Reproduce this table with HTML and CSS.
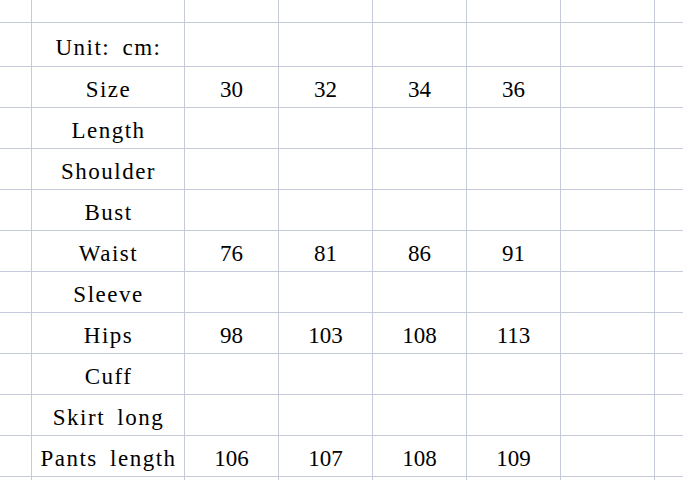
FILE: index.html
```html
<!DOCTYPE html>
<html>
<head>
<meta charset="utf-8">
<link rel="stylesheet" href="styles.css">
</head>
<body>
<div class="sheet">
  <div class="c"></div><div class="c"></div><div class="c"></div><div class="c"></div><div class="c"></div><div class="c"></div><div class="c"></div><div class="c"></div>

  <div class="c"></div><div class="c lab">Unit: cm:</div><div class="c"></div><div class="c"></div><div class="c"></div><div class="c"></div><div class="c"></div><div class="c"></div>

  <div class="c"></div><div class="c lab">Size</div><div class="c num">30</div><div class="c num">32</div><div class="c num">34</div><div class="c num">36</div><div class="c"></div><div class="c"></div>

  <div class="c"></div><div class="c lab">Length</div><div class="c"></div><div class="c"></div><div class="c"></div><div class="c"></div><div class="c"></div><div class="c"></div>

  <div class="c"></div><div class="c lab">Shoulder</div><div class="c"></div><div class="c"></div><div class="c"></div><div class="c"></div><div class="c"></div><div class="c"></div>

  <div class="c"></div><div class="c lab">Bust</div><div class="c"></div><div class="c"></div><div class="c"></div><div class="c"></div><div class="c"></div><div class="c"></div>

  <div class="c"></div><div class="c lab">Waist</div><div class="c num">76</div><div class="c num">81</div><div class="c num">86</div><div class="c num">91</div><div class="c"></div><div class="c"></div>

  <div class="c"></div><div class="c lab">Sleeve</div><div class="c"></div><div class="c"></div><div class="c"></div><div class="c"></div><div class="c"></div><div class="c"></div>

  <div class="c"></div><div class="c lab">Hips</div><div class="c num">98</div><div class="c num">103</div><div class="c num">108</div><div class="c num">113</div><div class="c"></div><div class="c"></div>

  <div class="c"></div><div class="c lab">Cuff</div><div class="c"></div><div class="c"></div><div class="c"></div><div class="c"></div><div class="c"></div><div class="c"></div>

  <div class="c"></div><div class="c lab">Skirt long</div><div class="c"></div><div class="c"></div><div class="c"></div><div class="c"></div><div class="c"></div><div class="c"></div>

  <div class="c"></div><div class="c lab">Pants length</div><div class="c num">106</div><div class="c num">107</div><div class="c num">108</div><div class="c num">109</div><div class="c"></div><div class="c"></div>

  <div class="c"></div><div class="c"></div><div class="c"></div><div class="c"></div><div class="c"></div><div class="c"></div><div class="c"></div><div class="c"></div>
</div>
</body>
</html>
```

FILE: styles.css
```css
html, body {
  margin: 0;
  padding: 0;
  background: #ffffff;
  overflow: hidden;
}
.sheet {
  width: 683px;
  height: 480px;
  display: grid;
  grid-template-columns: 31px 152px 93px 93px 93px 93px 93px 28px;
  grid-template-rows: 22px 43px repeat(10, 40px) 10px;
  gap: 1px;
  background: #c5cbdb;
  overflow: hidden;
  font-family: "Liberation Serif", "Times New Roman", serif;
  font-size: 23px;
  color: #000;
}
.c {
  background: #ffffff;
  display: flex;
  align-items: center;
  justify-content: center;
  white-space: nowrap;
  padding-top: 5px;
  box-sizing: border-box;
  line-height: 1;
}
.lab {
  letter-spacing: 1.5px;
  word-spacing: 5px;
  padding-left: 1px;
}
.num {
  letter-spacing: 0;
}
```
